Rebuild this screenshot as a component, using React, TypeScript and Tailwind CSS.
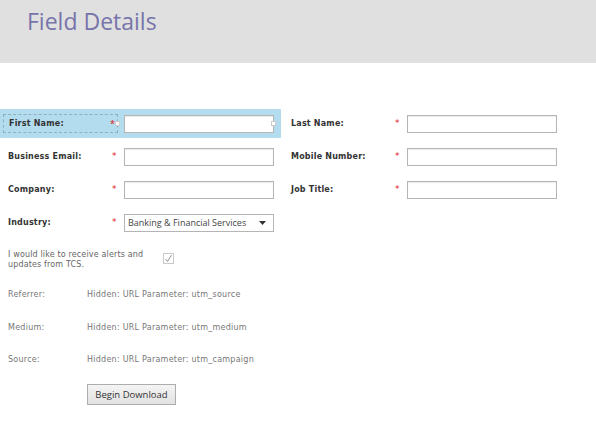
import { useState } from "react";

const labelCls =
  "w-[104px] text-[8px] font-bold text-[#333] tracking-[0.2px] [font-family:'DejaVu_Sans',Verdana,sans-serif]";
const starCls = "w-[12px] text-[9px] text-[#d22] [font-family:'DejaVu_Sans',sans-serif]";
const inputCls =
  "w-[150px] h-[18px] border border-[#b5b5b5] bg-white shadow-[inset_0_1px_1px_rgba(0,0,0,0.08)] outline-none px-1 text-[10px]";

const Field = ({ label }: { label: string }) => (
  <div className="flex items-center">
    <span className={labelCls}>{label}</span>
    <span className={starCls}>*</span>
    <input className={inputCls} />
  </div>
);

const App = () => {
  const [checked, setChecked] = useState(true);

  const hidden = [
    ["Referrer:", "utm_source"],
    ["Medium:", "utm_medium"],
    ["Source:", "utm_campaign"],
  ];

  return (
    <div className="w-[596px] h-[432px] bg-white overflow-hidden">
      {/* Header */}
      <div className="h-[63px] bg-[#e0e0e0] pl-[27px] pt-[6px]">
        <h1 className="text-[23px] leading-[30px] text-[#7774aa] [font-family:'Open_Sans',sans-serif]">
          Field Details
        </h1>
      </div>

      {/* Fields */}
      <div className="mt-[44px]">
        <div className="flex h-[33px] items-center">
          <div className="w-[281px] h-[29px] bg-[#b4dcef] flex items-center pl-[3px] relative">
            <div className="flex items-center">
              <span className="w-[115px] h-[19px] border border-dashed border-[#8fb0c2] flex items-center pl-[5px] text-[8px] font-bold text-[#333] tracking-[0.2px] [font-family:'DejaVu_Sans',Verdana,sans-serif]">
                First Name:
              </span>
              <span className="-ml-[8px] w-[14px] text-[9px] text-[#d22]">*</span>
              <input className={inputCls} />
            </div>
            <span className="absolute left-[115px] top-[12px] w-[5px] h-[5px] bg-white border border-[#ccc]" />
            <span className="absolute left-[271px] top-[12px] w-[5px] h-[5px] bg-white border border-[#ccc]" />
          </div>
          <div className="ml-[10px]">
            <Field label="Last Name:" />
          </div>
        </div>

        <div className="flex h-[33px] items-center">
          <div className="w-[281px] pl-[8px]">
            <Field label="Business Email:" />
          </div>
          <div className="ml-[10px]">
            <Field label="Mobile Number:" />
          </div>
        </div>

        <div className="flex h-[33px] items-center">
          <div className="w-[281px] pl-[8px]">
            <Field label="Company:" />
          </div>
          <div className="ml-[10px]">
            <Field label="Job Title:" />
          </div>
        </div>

        <div className="flex h-[33px] items-center pl-[8px]">
          <span className={labelCls}>Industry:</span>
          <span className={starCls}>*</span>
          <div className="w-[150px] h-[18px] border border-[#b5b5b5] bg-white flex items-center justify-between pl-[3px] pr-[7px]">
            <span className="text-[9px] text-[#444] [font-family:'Open_Sans',sans-serif]">
              Banking &amp; Financial Services
            </span>
            <svg width="7" height="4" viewBox="0 0 7 4">
              <path d="M0 0h7L3.5 4z" fill="#333" />
            </svg>
          </div>
        </div>
      </div>

      {/* Opt-in */}
      <div className="flex items-start pl-[8px] mt-[11px]">
        <p className="w-[155px] text-[8px] leading-[10px] tracking-[0.15px] text-[#666] [font-family:'DejaVu_Sans',sans-serif]">
          I would like to receive alerts and updates from TCS.
        </p>
        <button
          onClick={() => setChecked(!checked)}
          className="mt-[3px] w-[11px] h-[11px] border border-[#c9c9c9] bg-white flex items-center justify-center"
        >
          {checked && (
            <svg width="9" height="9" viewBox="0 0 9 9">
              <path d="M1.5 5l2 2.5L7.5 1" fill="none" stroke="#888" strokeWidth="0.9" />
            </svg>
          )}
        </button>
      </div>

      {/* Hidden params */}
      <div className="mt-[19px] pl-[8px]">
        {hidden.map(([label, param]) => (
          <div
            key={label}
            className="flex h-[32.5px] items-start text-[8px] tracking-[0.25px] text-[#777] [font-family:'DejaVu_Sans',sans-serif]"
          >
            <span className="w-[79px]">{label}</span>
            <span>Hidden: URL Parameter: {param}</span>
          </div>
        ))}
      </div>

      <div className="pl-[87px] -mt-[7px]">
        <button className="w-[89px] h-[21px] border border-[#adadad] bg-gradient-to-b from-[#f4f4f4] to-[#e2e2e2] text-[9.5px] text-[#333] [font-family:'Open_Sans',sans-serif]">
          Begin Download
        </button>
      </div>
    </div>
  );
};

export default App;
